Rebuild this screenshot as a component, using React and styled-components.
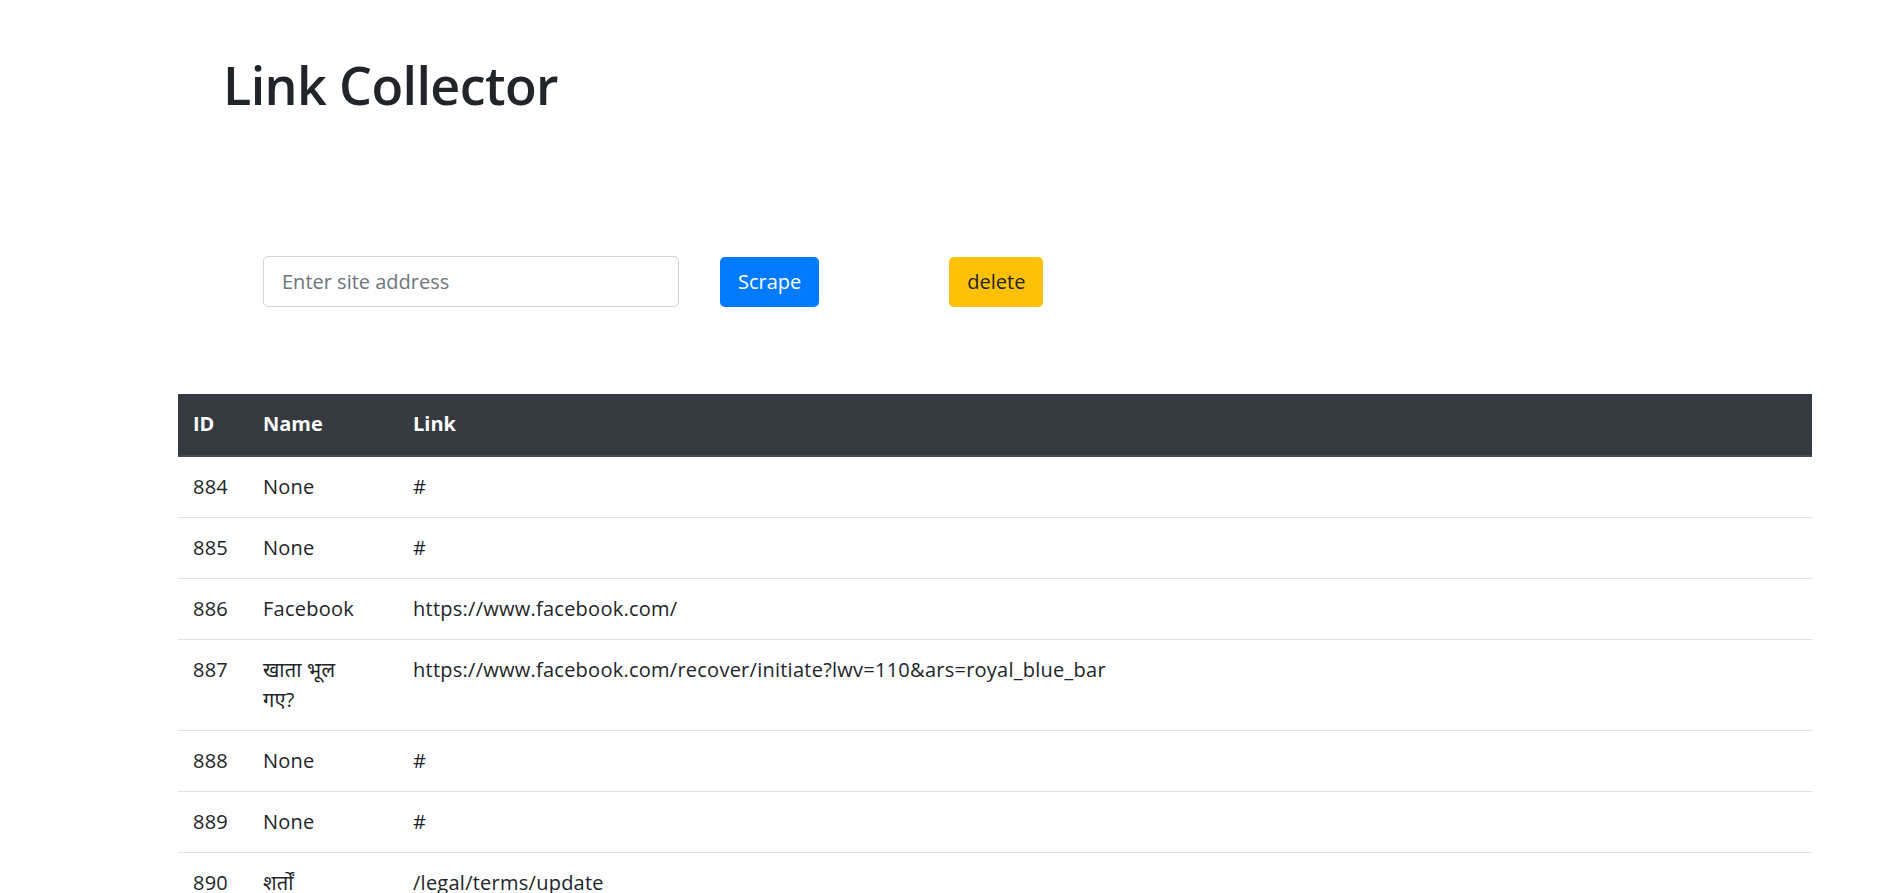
import React, { useState } from 'react';
import styled, { createGlobalStyle } from 'styled-components';

const GlobalStyle = createGlobalStyle`
    body {
        margin: 0;
        background: #fff;
        color: #212529;
        font-family: "Open Sans", "Noto Sans", "Noto Sans Devanagari", sans-serif;
        font-size: 20px;
        line-height: 1.5;
    }
`

const links = [
    { id: 884, name: 'None', link: '#' },
    { id: 885, name: 'None', link: '#' },
    { id: 886, name: 'Facebook', link: 'https://www.facebook.com/' },
    { id: 887, name: 'खाता भूल गए?', link: 'https://www.facebook.com/recover/initiate?lwv=110&ars=royal_blue_bar' },
    { id: 888, name: 'None', link: '#' },
    { id: 889, name: 'None', link: '#' },
    { id: 890, name: 'शर्तों', link: '/legal/terms/update' },
    { id: 891, name: 'None', link: '#' },
    { id: 892, name: 'None', link: '#' },
]

const App = () => {
    const [address, setAddress] = useState('')

    return (
        <Page>
            <GlobalStyle />
            <Title>Link Collector</Title>
            <ScrapeForm>
                <AddressInput
                    placeholder="Enter site address"
                    value={address}
                    onChange={e => setAddress(e.target.value)}
                />
                <Button $variant="primary" $gap={41}>Scrape</Button>
                <Button $variant="warning" $gap={130}>delete</Button>
            </ScrapeForm>
            <LinkTable>
                <colgroup>
                    <col style={{ width: 70 }} />
                    <col style={{ width: 150 }} />
                    <col />
                </colgroup>
                <thead>
                    <tr>
                        <Th>ID</Th>
                        <Th>Name</Th>
                        <Th>Link</Th>
                    </tr>
                </thead>
                <tbody>
                    {links.map(l => (
                        <tr key={l.id}>
                            <Td>{l.id}</Td>
                            <Td $narrow>{l.name}</Td>
                            <Td>{l.link}</Td>
                        </tr>
                    ))}
                </tbody>
            </LinkTable>
        </Page>
    )
}

export default App;

const Page = styled.div`
    width: 1875px;
    padding-bottom: 40px;
`

const Title = styled.h1`
    margin: 0;
    padding: 54px 0 0 223px;
    font-size: 52px;
    font-weight: 600;
    line-height: 1.2;
    letter-spacing: -0.6px;
`

const ScrapeForm = styled.div`
    display: flex;
    align-items: center;
    margin-top: 140px;
    padding-left: 263px;
`

const AddressInput = styled.input`
    box-sizing: border-box;
    width: 416px;
    height: 51px;
    padding: 0 18px;
    border: 1px solid #ced4da;
    border-radius: 5px;
    font-family: inherit;
    font-size: 20px;
    color: #495057;
    outline: none;

    &::placeholder {
        color: #6c757d;
    }
`

const Button = styled.button`
    box-sizing: border-box;
    height: 50px;
    margin-left: ${p => p.$gap}px;
    padding: 0 17px;
    border: 1px solid transparent;
    border-radius: 5px;
    font-family: inherit;
    font-size: 20px;
    cursor: pointer;
    background: ${p => p.$variant === 'primary' ? '#007bff' : '#ffc107'};
    color: ${p => p.$variant === 'primary' ? '#fff' : '#212529'};
`

const LinkTable = styled.table`
    width: 1634px;
    margin: 87px 0 0 178px;
    border-collapse: collapse;
    table-layout: fixed;
`

const Th = styled.th`
    padding: 15px 15px 16px;
    text-align: left;
    font-weight: 700;
    color: #fff;
    background: #343a40;
    border-bottom: 2px solid #454d55;
`

const Td = styled.td`
    padding: 15px ${p => p.$narrow ? 40 : 15}px 15px 15px;
    vertical-align: top;
    border-top: 1px solid #dee2e6;
    word-wrap: break-word;
    letter-spacing: 0.25px;
`
